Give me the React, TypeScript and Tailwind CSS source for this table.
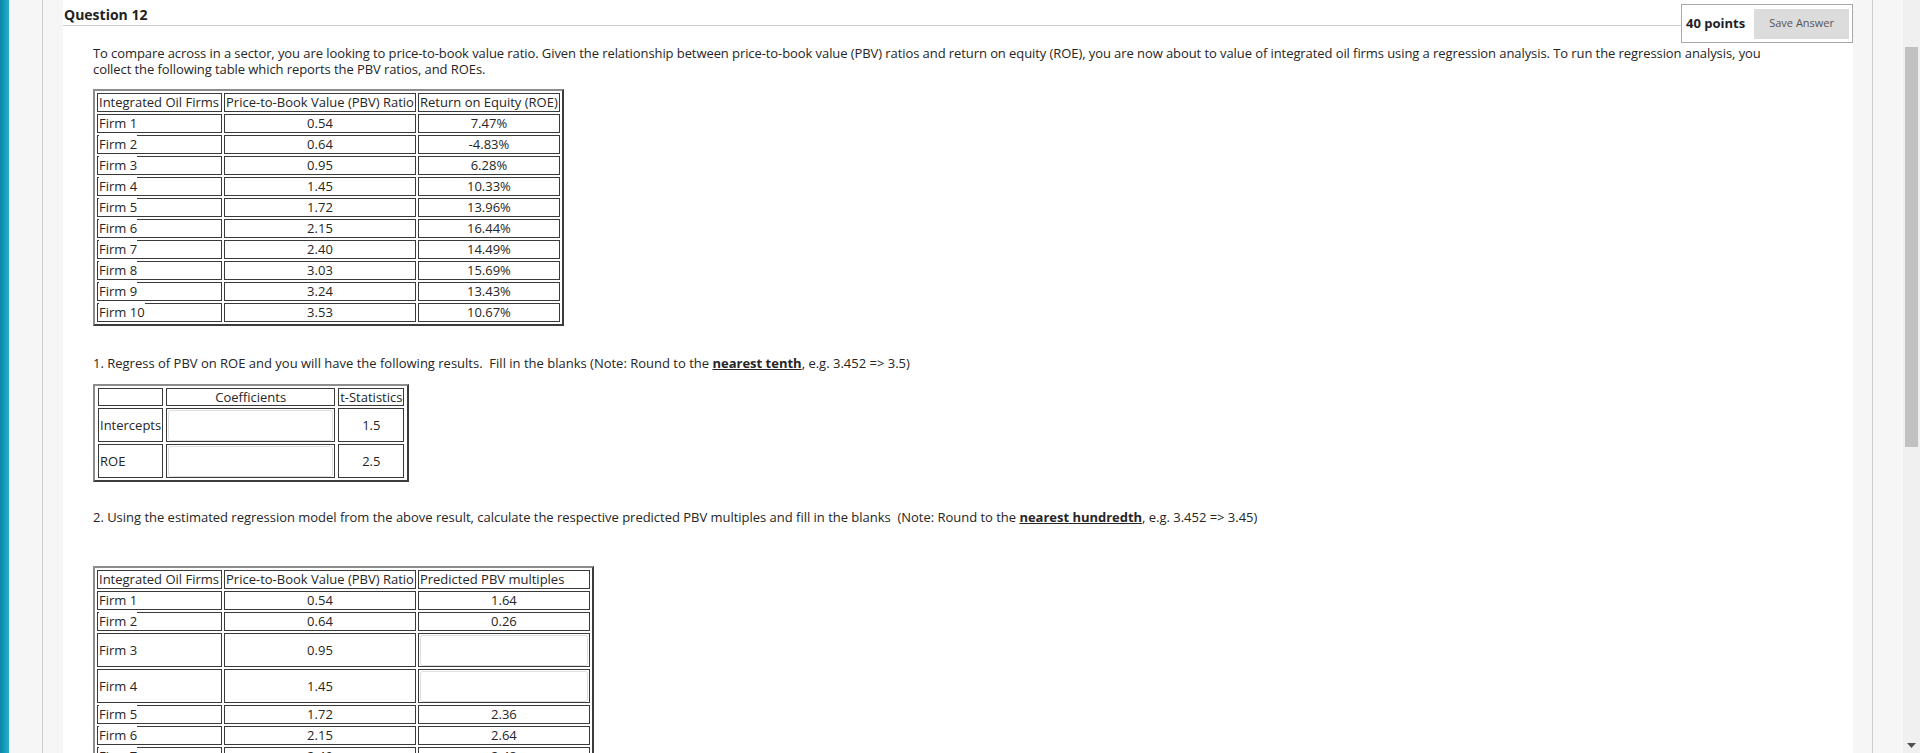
import React from "react";

const roeRows = [
  ["Firm 1", "0.54", "7.47%"],
  ["Firm 2", "0.64", "-4.83%"],
  ["Firm 3", "0.95", "6.28%"],
  ["Firm 4", "1.45", "10.33%"],
  ["Firm 5", "1.72", "13.96%"],
  ["Firm 6", "2.15", "16.44%"],
  ["Firm 7", "2.40", "14.49%"],
  ["Firm 8", "3.03", "15.69%"],
  ["Firm 9", "3.24", "13.43%"],
  ["Firm 10", "3.53", "10.67%"],
];

// null = blank to fill in
const predictedRows: [string, string, string | null][] = [
  ["Firm 1", "0.54", "1.64"],
  ["Firm 2", "0.64", "0.26"],
  ["Firm 3", "0.95", null],
  ["Firm 4", "1.45", null],
  ["Firm 5", "1.72", "2.36"],
  ["Firm 6", "2.15", "2.64"],
  ["Firm 7", "2.40", "2.48"],
  ["Firm 8", "3.03", "2.81"],
  ["Firm 9", "3.24", "2.55"],
  ["Firm 10", "3.53", "2.02"],
];

const tableCls =
  "border-separate border-2 border-t-[#8c8c8c] border-l-[#8c8c8c] border-r-[#3c3c3c] border-b-[#3c3c3c] text-[13px] leading-[17px]";
const cellCls = "border border-[#3a3a3a] px-px py-0 whitespace-nowrap font-normal";

function Label({ text, cut }: { text: string; cut?: boolean }) {
  return <span className={cut ? "bg-white shadow-[0_-1px_0_0_#fff]" : ""}>{text}</span>;
}

function Blank() {
  return <input className="block h-[31px] w-full rounded-[3px] border border-[#dedede] bg-white" />;
}

export default function App() {
  return (
    <div className="flex h-[753px] w-[1920px] overflow-hidden bg-white font-['Open_Sans',sans-serif] text-[#262626]">
      <div className="w-[9px] shrink-0 bg-[linear-gradient(90deg,#0a86a7,#24afce)]" />
      <div className="flex w-[54px] shrink-0 bg-[#f6f6f6]">
        <div className="ml-[33px] w-px bg-[#d0d0d0]" />
      </div>

      <main className="w-[1790px] shrink-0 bg-white">
        <div className="flex items-start">
          <div className="h-[26px] flex-1 border-b border-[#cfcfcf] pl-px pt-[5px] text-[14px] font-bold leading-[19px] text-[#222]">
            Question 12
          </div>
          <div className="mt-[4px] flex h-[39px] w-[172px] items-center border border-[#a8a8a8]">
            <span className="pl-[4px] text-[13px] font-bold text-[#1e1e2a]">40 points</span>
            <button className="ml-[9px] h-[30px] w-[95px] bg-[#dcdcdc] text-[11px] text-[#555]">Save Answer</button>
          </div>
        </div>

        <div className="pl-[30px]">
          <p className="mt-[2px] whitespace-nowrap text-[13px] leading-[16px] tracking-[-0.08px]">
            To compare across in a sector, you are looking to price-to-book value ratio. Given the relationship between
            price-to-book value (PBV) ratios and return on equity (ROE), you are now about to value of integrated oil firms
            using a regression analysis. To run the regression analysis, you
            <br />
            collect the following table which reports the PBV ratios, and ROEs.
          </p>

          <table className={`mt-[12px] border-spacing-[2px] ${tableCls}`}>
            <tbody>
              <tr>
                <td className={`${cellCls} w-[125px] text-left`}>Integrated Oil Firms</td>
                <td className={`${cellCls} w-[191px] text-center`}>Price-to-Book Value (PBV) Ratio</td>
                <td className={`${cellCls} w-[142px] text-center`}>Return on Equity (ROE)</td>
              </tr>
              {roeRows.map(([firm, pbv, roe], i) => (
                <tr key={firm}>
                  <td className={`${cellCls} text-left`}>
                    <Label text={firm} cut={i > 0} />
                  </td>
                  <td className={`${cellCls} text-center`}>{pbv}</td>
                  <td className={`${cellCls} text-center`}>{roe}</td>
                </tr>
              ))}
            </tbody>
          </table>

          <p className="mt-[29px] whitespace-pre text-[13px] leading-[16px]">
            {"1. Regress of PBV on ROE and you will have the following results.  Fill in the blanks (Note: Round to the "}
            <b className="underline">nearest tenth</b>
            {", e.g. 3.452 => 3.5)"}
          </p>

          <table
            className={`mt-[13px] border-spacing-x-[3px] border-spacing-y-[2px] ${tableCls}`}
          >
            <tbody>
              <tr>
                <td className={`${cellCls} w-[65px] leading-[16px]`} />
                <td className={`${cellCls} w-[169px] text-center leading-[16px]`}>Coefficients</td>
                <td className={`${cellCls} w-[66px] text-center leading-[16px]`}>t-Statistics</td>
              </tr>
              {[
                ["Intercepts", "1.5"],
                ["ROE", "2.5"],
              ].map(([name, t]) => (
                <tr key={name}>
                  <td className={`${cellCls} text-left`}>{name}</td>
                  <td className={`${cellCls} pt-px`}>
                    <Blank />
                  </td>
                  <td className={`${cellCls} text-center`}>{t}</td>
                </tr>
              ))}
            </tbody>
          </table>

          <p className="mt-[27px] whitespace-pre text-[13px] leading-[16px] tracking-[-0.02px]">
            {
              "2. Using the estimated regression model from the above result, calculate the respective predicted PBV multiples and fill in the blanks  (Note: Round to the "
            }
            <b className="underline">nearest hundredth</b>
            {", e.g. 3.452 => 3.45)"}
          </p>

          <table className={`mt-[41px] border-spacing-[2px] ${tableCls}`}>
            <tbody>
              <tr>
                <td className={`${cellCls} w-[125px] text-left`}>Integrated Oil Firms</td>
                <td className={`${cellCls} w-[191px] text-center`}>Price-to-Book Value (PBV) Ratio</td>
                <td className={`${cellCls} w-[172px] text-left`}>Predicted PBV multiples</td>
              </tr>
              {predictedRows.map(([firm, pbv, pred], i) => (
                <tr key={firm}>
                  <td className={`${cellCls} text-left`}>
                    <Label text={firm} cut={i > 0 && pred !== null} />
                  </td>
                  <td className={`${cellCls} text-center`}>{pbv}</td>
                  <td className={`${cellCls} ${pred === null ? "pt-px" : ""} text-center`}>
                    {pred === null ? <Blank /> : pred}
                  </td>
                </tr>
              ))}
            </tbody>
          </table>
        </div>
      </main>

      <div className="flex w-[50px] shrink-0 bg-[#f6f6f6]">
        <div className="ml-[19px] w-px bg-[#cfcfcf]" />
      </div>
      <div className="relative w-[17px] shrink-0 bg-[#f0f0f0]">
        <div className="mx-[2px] mt-[47px] h-[400px] bg-[#c1c1c1]" />
        <svg className="absolute bottom-[5px] left-[4px]" width="9" height="5" viewBox="0 0 9 5">
          <path d="M0 0h9L4.5 5z" fill="#505050" />
        </svg>
      </div>
    </div>
  );
}
